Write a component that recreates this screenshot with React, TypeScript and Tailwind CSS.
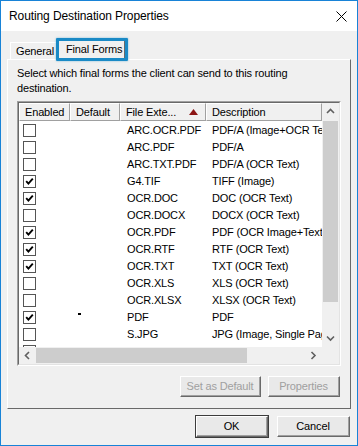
import React from "react";

type Row = { ext: string; desc: string; on: boolean; def?: boolean };

const rows: Row[] = [
  { ext: "ARC.OCR.PDF", desc: "PDF/A (Image+OCR Text)", on: false },
  { ext: "ARC.PDF", desc: "PDF/A", on: false },
  { ext: "ARC.TXT.PDF", desc: "PDF/A (OCR Text)", on: false },
  { ext: "G4.TIF", desc: "TIFF (Image)", on: true },
  { ext: "OCR.DOC", desc: "DOC (OCR Text)", on: true },
  { ext: "OCR.DOCX", desc: "DOCX (OCR Text)", on: false },
  { ext: "OCR.PDF", desc: "PDF (OCR Image+Text)", on: true },
  { ext: "OCR.RTF", desc: "RTF (OCR Text)", on: true },
  { ext: "OCR.TXT", desc: "TXT (OCR Text)", on: true },
  { ext: "OCR.XLS", desc: "XLS (OCR Text)", on: false },
  { ext: "OCR.XLSX", desc: "XLSX (OCR Text)", on: false },
  { ext: "PDF", desc: "PDF", on: true, def: true },
  { ext: "S.JPG", desc: "JPG (Image, Single Page)", on: false },
  { ext: "", desc: "", on: false },
];

function Check({ on }: { on: boolean }) {
  return (
    <div className="w-[13px] h-[13px] border border-[#555555] bg-white flex items-center justify-center shrink-0">
      {on && (
        <svg width="9" height="9" viewBox="0 0 9 9">
          <path d="M1.2 4.2 L3.4 6.6 L7.8 1.6" stroke="#000" strokeWidth="1.9" fill="none" />
        </svg>
      )}
    </div>
  );
}

function Chevron({ dir }: { dir: "up" | "down" | "left" | "right" }) {
  const d =
    dir === "up"
      ? "M1 5 L4.5 1.5 L8 5"
      : dir === "down"
      ? "M1 1.5 L4.5 5 L8 1.5"
      : dir === "left"
      ? "M5 1 L1.5 4.5 L5 8"
      : "M1.5 1 L5 4.5 L1.5 8";
  const w = dir === "up" || dir === "down" ? 9 : 7;
  const h = dir === "up" || dir === "down" ? 7 : 9;
  return (
    <svg width={w} height={h} viewBox={`0 0 ${w} ${h}`}>
      <path d={d} stroke="#606060" strokeWidth="1.6" fill="none" />
    </svg>
  );
}

function HeaderCell({ w, children, extra }: { w: string; children: React.ReactNode; extra?: React.ReactNode }) {
  return (
    <div
      className={`${w} h-full border-t border-l border-white border-r border-r-[#a0a0a0] border-b border-b-[#a0a0a0] flex items-center pl-[5px] pr-[4px] overflow-hidden whitespace-nowrap`}
    >
      <span className="flex-1 overflow-hidden">{children}</span>
      {extra}
    </div>
  );
}

function ClassicButton({ label, disabled, isDefault, w }: { label: string; disabled?: boolean; isDefault?: boolean; w: string }) {
  return (
    <div
      className={`${w} h-[23px] ${
        isDefault ? "border border-[#3c3c3c]" : "border border-transparent"
      } flex`}
    >
      <div className="flex-1 border-t border-l border-white border-r border-r-[#696969] border-b border-b-[#696969] flex">
        <div className="flex-1 border-r border-b border-[#a0a0a0] bg-[#e9e9e9] flex items-center justify-center">
          <span className={disabled ? "text-[#a0a0a0]" : "text-black"}>{label}</span>
        </div>
      </div>
    </div>
  );
}

export default function App() {
  return (
    <div className="w-[358px] h-[446px] border border-[#1883d7] bg-[#f0f0f0] flex flex-col font-['Liberation_Sans',Arial,sans-serif] text-[11px] tracking-[-0.15px] text-black overflow-hidden">
      {/* Title bar */}
      <div className="h-[30px] bg-white flex items-center justify-between pl-[8px] pr-[10px] shrink-0">
        <span className="text-[12px] tracking-[-0.1px]">Routing Destination Properties</span>
        <svg width="11" height="11" viewBox="0 0 11 11">
          <path d="M0.5 0.5 L10.5 10.5 M10.5 0.5 L0.5 10.5" stroke="#000" strokeWidth="1" />
        </svg>
      </div>

      {/* Body */}
      <div className="flex flex-col px-[6px] flex-1">
        {/* Tabs */}
        <div className="h-[28px] flex items-end shrink-0">
          <div className="ml-[3px] w-[48px] h-[17px] border-t border-l border-white border-r border-r-[#a0a0a0] flex items-center pl-[5px] pt-[1px]">
            General
          </div>
          <div className="relative z-10 w-[67px] h-[21px] -mb-px bg-[#f0f0f0] border-t border-l border-white border-r border-r-[#696969] flex items-center pl-[7px] pb-[2px]">
            Final Forms
            <div className="absolute -left-[3px] -top-[2px] -right-[4px] -bottom-[1px] border-[3px] border-[#1a8ac6] rounded-[1px] shadow-[0_0_2px_rgba(26,138,198,0.6)]" />
          </div>
        </div>

        {/* Panel */}
        <div className="h-[350px] border-t border-l border-white border-r border-r-[#696969] border-b border-b-[#696969] flex flex-col pl-[9px] pr-[8px] pt-[6px]">
          <div className="leading-[15px]">
            Select which final forms the client can send to this routing
            <br />
            destination.
          </div>

          {/* List view */}
          <div className="mt-[5px] w-[324px] border-t border-l border-[#a0a0a0] border-r border-r-white border-b border-b-white">
            <div className="border-t border-l border-[#696969] border-r border-r-[#e3e3e3] border-b border-b-[#e3e3e3] flex flex-col">
              <div className="flex h-[244px]">
                <div className="w-[303px] flex flex-col bg-white overflow-hidden">
                  <div className="h-[18px] flex bg-[#f0f0f0] shrink-0">
                    <HeaderCell w="w-[51px]">Enabled</HeaderCell>
                    <HeaderCell w="w-[50px]">Default</HeaderCell>
                    <HeaderCell
                      w="w-[86px]"
                      extra={
                        <svg width="9" height="6" viewBox="0 0 9 6" className="shrink-0 mr-[3px]">
                          <path d="M0 6 L4.5 0 L9 6 Z" fill="#8b1414" />
                        </svg>
                      }
                    >
                      File Exte...
                    </HeaderCell>
                    <HeaderCell w="w-[116px]">Description</HeaderCell>
                  </div>
                  <div className="pt-[1px] flex flex-col">
                    {rows.map((r, i) => (
                      <div key={i} className="h-[17px] flex items-center shrink-0 whitespace-nowrap">
                        <div className="w-[51px] pl-[4px] flex items-center">
                          <Check on={r.on} />
                        </div>
                        <div className="w-[50px] flex items-start h-full">
                          {r.def && <div className="ml-[8px] mt-[4px] w-[3px] h-[2px] bg-black" />}
                        </div>
                        <div className="w-[86px] pl-[7px] overflow-hidden">{r.ext}</div>
                        <div className="w-[116px] pl-[6px] overflow-hidden">{r.desc}</div>
                      </div>
                    ))}
                  </div>
                </div>
                {/* Vertical scrollbar */}
                <div className="w-[17px] flex flex-col bg-[#f0f0f0]">
                  <div className="h-[17px] flex items-center justify-center">
                    <Chevron dir="up" />
                  </div>
                  <div className="flex-1 flex flex-col pt-[1px]">
                    <div className="h-[181px] mx-[1px] bg-[#cdcdcd]" />
                  </div>
                  <div className="h-[17px] flex items-center justify-center">
                    <Chevron dir="down" />
                  </div>
                </div>
              </div>
              {/* Horizontal scrollbar */}
              <div className="flex h-[17px]">
                <div className="w-[303px] flex bg-[#f0f0f0]">
                  <div className="w-[17px] flex items-center justify-center">
                    <Chevron dir="left" />
                  </div>
                  <div className="flex-1 flex items-center">
                    <div className="w-[211px] h-[15px] bg-[#cdcdcd]" />
                  </div>
                  <div className="w-[17px] flex items-center justify-center">
                    <Chevron dir="right" />
                  </div>
                </div>
                <div className="w-[17px] bg-[#f0f0f0]" />
              </div>
            </div>
          </div>

          {/* List buttons */}
          <div className="mt-[9px] flex justify-end gap-[5px] w-[324px]">
            <ClassicButton label="Set as Default" disabled w="w-[83px]" />
            <ClassicButton label="Properties" disabled w="w-[74px]" />
          </div>
        </div>

        {/* Dialog buttons */}
        <div className="mt-[6px] flex justify-end gap-[7px]">
          <ClassicButton label="OK" isDefault w="w-[74px]" />
          <ClassicButton label="Cancel" w="w-[75px]" />
        </div>
      </div>
    </div>
  );
}
